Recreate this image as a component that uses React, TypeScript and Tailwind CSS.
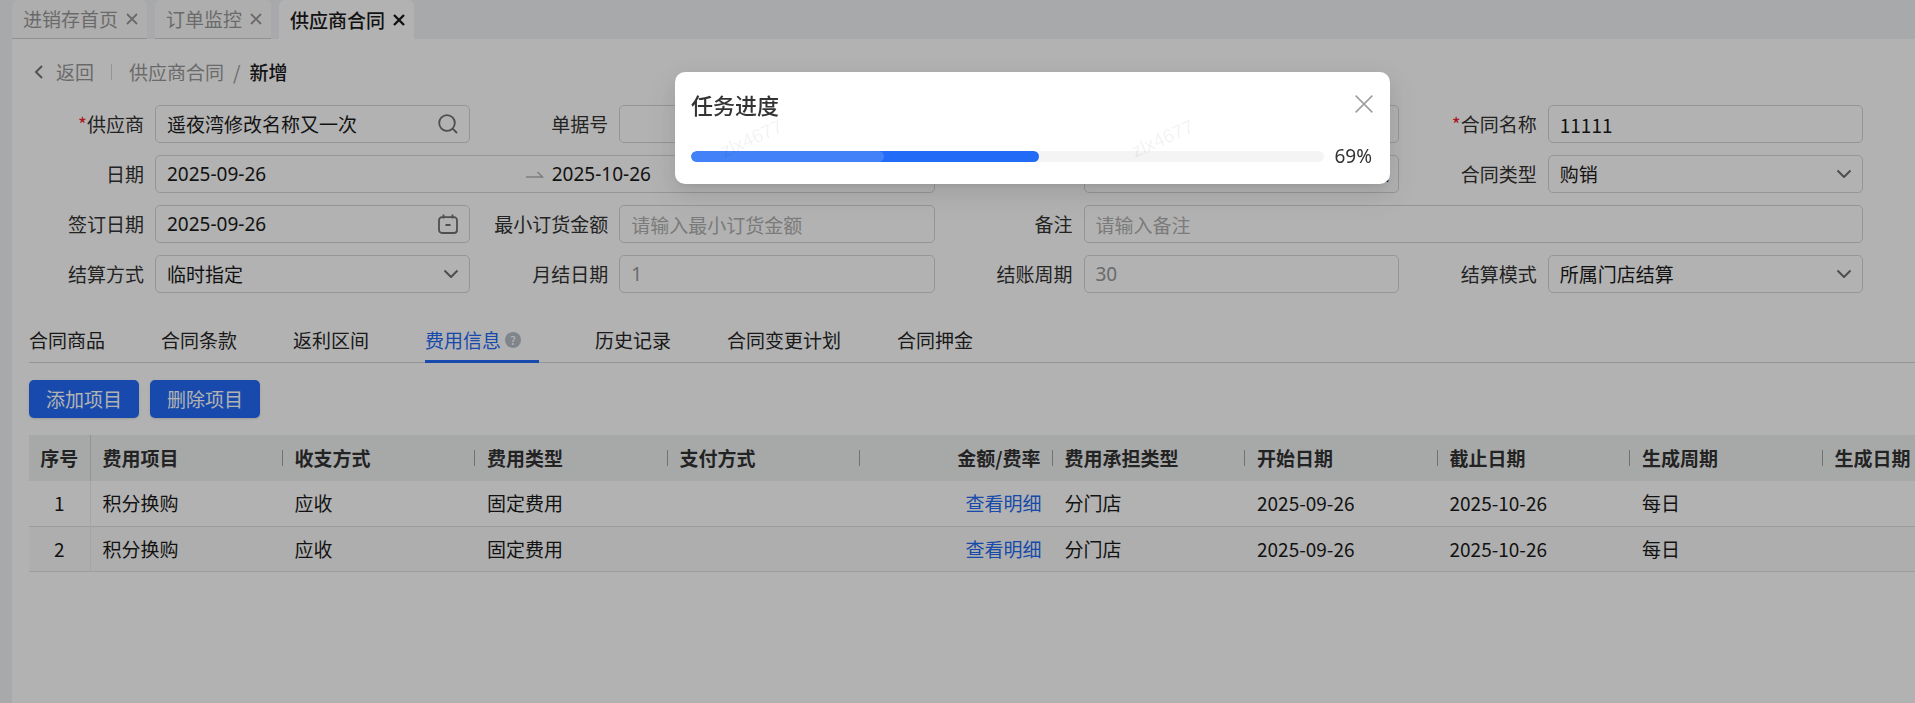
import React, { useState } from "react";
import { clsx } from "clsx";

const pageTabs = ["进销存首页", "订单监控", "供应商合同"];

const detailTabs = [
  { key: "goods", label: "合同商品" },
  { key: "terms", label: "合同条款" },
  { key: "rebate", label: "返利区间" },
  { key: "fee", label: "费用信息", help: true },
  { key: "history", label: "历史记录" },
  { key: "plan", label: "合同变更计划" },
  { key: "deposit", label: "合同押金" },
];

const columns = [
  "费用项目",
  "收支方式",
  "费用类型",
  "支付方式",
  "金额/费率",
  "费用承担类型",
  "开始日期",
  "截止日期",
  "生成周期",
  "生成日期",
];

const fees = [
  { id: 1, item: "积分换购", direction: "应收", type: "固定费用", pay: "", bearer: "分门店", start: "2025-09-26", end: "2025-10-26", cycle: "每日", day: "" },
  { id: 2, item: "积分换购", direction: "应收", type: "固定费用", pay: "", bearer: "分门店", start: "2025-09-26", end: "2025-10-26", cycle: "每日", day: "" },
];

const box = "w-full h-[38px] rounded-[5px] border border-[#d6d6d6] bg-white text-[19px]";
const dark = "text-[#1a1a1a]";
const latin = "font-['Noto_Sans','Noto_Sans_CJK_SC',sans-serif]";

function CloseIcon({ className, strokeWidth }: { className: string; strokeWidth: number }) {
  return (
    <svg viewBox="0 0 12 12" className={className} fill="none" stroke="currentColor" strokeWidth={strokeWidth}>
      <path d="M1 1l10 10M11 1L1 11" />
    </svg>
  );
}

function Chevron() {
  return (
    <svg viewBox="0 0 16 10" className="w-4 h-[10px] text-[#707070]" fill="none" stroke="currentColor" strokeWidth="2" strokeLinejoin="round">
      <path d="M1.5 1.5L8 8l6.5-6.5" />
    </svg>
  );
}

function CalendarIcon() {
  return (
    <svg viewBox="0 0 20 20" className="w-5 h-5 shrink-0 text-[#707070]" fill="none" stroke="currentColor" strokeWidth="1.8">
      <path d="M4 3.2h12a3 3 0 0 1 3 3V16a3 3 0 0 1-3 3H4a3 3 0 0 1-3-3V6.200a3 3 0 0 1 3-3z" />
      <path d="M5.500 0.500v4M14.500 0.500v4M7.500 11h5" />
    </svg>
  );
}

function Label({ htmlFor, required, children }: { htmlFor: string; required?: boolean; children: React.ReactNode }) {
  return (
    <label htmlFor={htmlFor} className="pr-[11px] text-right whitespace-nowrap text-[#333]">
      {required && <span className="text-[#f5222d]">*</span>}
      {children}
    </label>
  );
}

function SelectBox({ id, options }: { id: string; options: string[] }) {
  return (
    <div className="relative">
      <select id={id} className={clsx(box, dark, "appearance-none pl-[11px] pr-9")}>
        {options.map((o) => (
          <option key={o}>{o}</option>
        ))}
      </select>
      <span className="absolute inset-y-0 right-[11px] flex items-center pointer-events-none">
        <Chevron />
      </span>
    </div>
  );
}

function ContractForm() {
  return (
    <form className="grid grid-cols-[131px_minmax(0,1fr)_149px_minmax(0,1fr)_149px_minmax(0,1fr)_149px_minmax(0,1fr)] items-center gap-y-3 pl-3 pr-[52px]">
      <Label htmlFor="supplier" required>供应商</Label>
      <div className={clsx(box, dark, "flex items-center px-[11px]")}>
        <input id="supplier" className="flex-1 min-w-0 outline-none" defaultValue="遥夜湾修改名称又一次" />
        <svg viewBox="0 0 20 20" className="w-5 h-5 text-[#707070]" fill="none" stroke="currentColor" strokeWidth="1.8">
          <circle cx="9" cy="9" r="7.800" />
          <path d="M14.600 14.600L19 19" />
        </svg>
      </div>
      <Label htmlFor="billNo">单据号</Label>
      <input id="billNo" className={clsx(box, dark, "px-[11px]")} />
      <span />
      <input aria-label="合同编号" className={clsx(box, dark, "px-[11px]")} />
      <Label htmlFor="contractName" required>合同名称</Label>
      <input id="contractName" className={clsx(box, dark, "px-[11px]")} defaultValue="11111" />

      <Label htmlFor="startDate">日期</Label>
      <div className={clsx(box, dark, latin, "col-span-3 flex items-center px-[11px]")}>
        <input id="startDate" className="flex-1 min-w-0 outline-none" defaultValue="2025-09-26" />
        <svg viewBox="0 0 18 8" className="w-[18px] h-2 mx-2 text-[#b5b5b5]" fill="none" stroke="currentColor" strokeWidth="1.5">
          <path d="M0 7h16.5L11.5 2" />
        </svg>
        <input aria-label="结束日期" className="flex-1 min-w-0 outline-none" defaultValue="2025-10-26" />
        <CalendarIcon />
      </div>
      <span />
      <div className={clsx(box, dark, "flex items-center justify-end px-2")}>
        <input aria-label="门店" className="flex-1 min-w-0 outline-none" />
        <button type="button">...</button>
      </div>
      <Label htmlFor="contractType">合同类型</Label>
      <SelectBox id="contractType" options={["购销"]} />

      <Label htmlFor="signDate">签订日期</Label>
      <div className={clsx(box, dark, latin, "flex items-center px-[11px]")}>
        <input id="signDate" className="flex-1 min-w-0 outline-none" defaultValue="2025-09-26" />
        <CalendarIcon />
      </div>
      <Label htmlFor="minAmount">最小订货金额</Label>
      <input id="minAmount" className={clsx(box, dark, "px-[11px] placeholder:text-[#b0b0b0]")} placeholder="请输入最小订货金额" />
      <Label htmlFor="remark">备注</Label>
      <input id="remark" className={clsx(box, dark, "col-span-3 px-[11px] placeholder:text-[#b0b0b0]")} placeholder="请输入备注" />

      <Label htmlFor="settleWay">结算方式</Label>
      <SelectBox id="settleWay" options={["临时指定"]} />
      <Label htmlFor="monthDay">月结日期</Label>
      <input id="monthDay" disabled className={clsx(box, latin, "px-[11px] text-[#999]")} defaultValue="1" />
      <Label htmlFor="cycle">结账周期</Label>
      <input id="cycle" disabled className={clsx(box, latin, "px-[11px] text-[#999]")} defaultValue="30" />
      <Label htmlFor="settleMode">结算模式</Label>
      <SelectBox id="settleMode" options={["所属门店结算"]} />
    </form>
  );
}

function FeeTable() {
  return (
    <div className="overflow-hidden">
      <table className="table-fixed w-[1986px] border-collapse text-left">
        <thead>
          <tr className="h-[46px] bg-[#f0f2f3] text-[#333]">
            <th className="w-[61px] p-0 text-center font-bold border-r border-[#d0d3d6]">序号</th>
            {columns.map((c, i) => (
              <th key={c} className="p-0 font-bold">
                <div className={clsx("h-4 pl-3 pr-[11px] flex items-center border-r border-[#a0a4ab]", i === 4 && "justify-end")}>{c}</div>
              </th>
            ))}
          </tr>
        </thead>
        <tbody>
          {fees.map((f) => (
            <tr key={f.id} className="h-[45px] border-b border-[#e0e0e0] text-[#1a1a1a] even:bg-[#fafafa]">
              <td className="p-0 text-center border-r border-[#ececec]">{f.id}</td>
              <td className="px-3">{f.item}</td>
              <td className="px-3">{f.direction}</td>
              <td className="px-3">{f.type}</td>
              <td className="px-3">{f.pay}</td>
              <td className="pl-3 pr-[11px] text-right">
                <a href="#detail" className="text-[#226bf3]">查看明细</a>
              </td>
              <td className="px-3">{f.bearer}</td>
              <td className="px-3">{f.start}</td>
              <td className="px-3">{f.end}</td>
              <td className="px-3">{f.cycle}</td>
              <td className="px-3">{f.day}</td>
            </tr>
          ))}
        </tbody>
      </table>
    </div>
  );
}

function ProgressDialog({ percent, shown }: { percent: number; shown: number }) {
  return (
    <div className="fixed inset-0 flex justify-center items-start bg-black/30 pl-[150px] pt-[72px]">
      <div
        role="dialog"
        aria-label="任务进度"
        className="relative w-[715px] px-4 pt-[14px] pb-4 rounded-[10px] bg-white shadow-[0_7px_19px_0_rgba(0,0,0,0.08),0_4px_7px_-5px_rgba(0,0,0,0.12),0_11px_34px_10px_rgba(0,0,0,0.05)]"
      >
        <div className="flex items-center justify-between h-9">
          <h2 className="text-[22px] font-medium text-[#333]">任务进度</h2>
          <button type="button" aria-label="关闭" className="text-[#a0a0a0]">
            <CloseIcon className="w-5 h-5" strokeWidth={1} />
          </button>
        </div>
        <div className="flex items-center mt-[22px] h-6">
          <div className="flex-1 h-[11px] rounded-full bg-[#f4f4f4] overflow-hidden">
            <div className="h-full rounded-full bg-[#226bf6]" style={{ width: `${shown}%` }}>
              <div className="w-[193px] h-full rounded-full bg-white/15" />
            </div>
          </div>
          <span className={clsx(latin, "ml-[10px] mr-[2px] text-[19px] text-[#333]")}>{percent}%</span>
        </div>
        <div className="absolute left-11 top-[55px] flex gap-[345px] font-['Liberation_Sans',sans-serif] text-[19px] text-black/5 pointer-events-none">
          <span className="-rotate-[24deg]">zlx4677</span>
          <span className="-rotate-[24deg]">zlx4677</span>
        </div>
      </div>
    </div>
  );
}

export default function App() {
  const [active, setActive] = useState("fee");

  return (
    <div className="min-h-screen pl-3 flex flex-col overflow-hidden bg-[#f0f2f4] font-['Noto_Sans_CJK_SC',sans-serif] text-[19px] leading-6">
      <nav className="flex gap-2 h-[39px]">
        {pageTabs.map((t, i) => {
          const current = i === pageTabs.length - 1;
          return (
            <div
              key={t}
              className={clsx(
                "flex items-center gap-2 pl-[11px] pr-[9px] rounded-t-md",
                current ? "bg-white text-[#1a1a1a]" : "bg-[#fafafa] text-[#999] border-b border-[#d0d0d0]"
              )}
            >
              <a href="#tab" className={clsx(current && "font-medium")}>{t}</a>
              <button type="button" aria-label={`关闭${t}`}>
                <CloseIcon className="w-3 h-3" strokeWidth={current ? 2.4 : 1.8} />
              </button>
            </div>
          );
        })}
      </nav>

      <main className="flex-1 bg-white">
        <div className="flex items-center h-[66px] pl-[22px] text-[#999]">
          <button type="button" className="flex items-center">
            <svg viewBox="0 0 10 16" className="w-[10px] h-4 mr-3 text-[#777]" fill="none" stroke="currentColor" strokeWidth="2">
              <path d="M8 2L2 8l6 6" />
            </svg>
            返回
          </button>
          <span className="w-px h-4 mx-[17px] bg-[#d6d6d6]" />
          <a href="#contracts">供应商合同</a>
          <span className="mx-[9px]">/</span>
          <span className="font-medium text-[#1a1a1a]">新增</span>
        </div>

        <ContractForm />

        <div className="pl-[17px] mt-6">
          <div className="flex gap-14 h-[46px] border-b border-[#d6d6d6]">
            {detailTabs.map((t) => (
              <button
                key={t.key}
                type="button"
                onClick={() => setActive(t.key)}
                className={clsx(
                  "flex items-center h-[46px] pt-[2px] border-b-3",
                  active === t.key ? "border-[#226bf6] text-[#226bf6]" : "border-transparent text-[#262626]"
                )}
              >
                {t.label}
                {t.help && (
                  <span className="w-4 h-4 ml-1 mr-[18px] rounded-full bg-[#b8bfc7] text-white text-[12px] leading-4 font-medium">?</span>
                )}
              </button>
            ))}
          </div>

          <div className="flex gap-[11px] py-[17px]">
            <button type="button" className="h-[38px] px-[17px] rounded-[5px] bg-[#226bf6] text-white shadow-sm">添加项目</button>
            <button type="button" className="h-[38px] px-[17px] rounded-[5px] bg-[#226bf6] text-white shadow-sm">删除项目</button>
          </div>

          <FeeTable />
        </div>
      </main>

      <ProgressDialog percent={69} shown={55} />
    </div>
  );
}
